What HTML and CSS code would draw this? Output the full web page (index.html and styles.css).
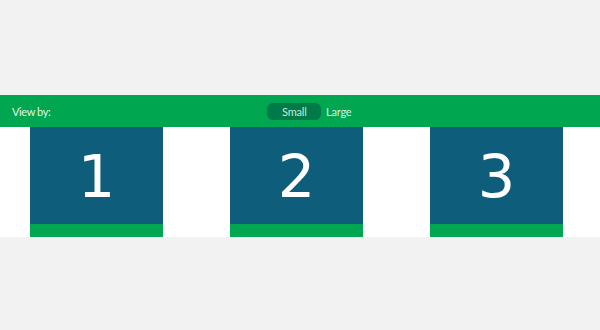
FILE: index.html
```html
<!DOCTYPE html>
<html>
<head>
<meta charset="utf-8">
<link rel="stylesheet" href="styles.css">
</head>
<body>
<div class="page">
  <div class="toolbar">
    <span class="label">View by:</span>
    <div class="toggle">
      <span class="opt active">Small</span>
      <span class="opt">Large</span>
    </div>
  </div>
  <div class="tiles">
    <div class="cell"><div class="tile"><div class="face">1</div><div class="foot"></div></div></div>
    <div class="cell"><div class="tile"><div class="face">2</div><div class="foot"></div></div></div>
    <div class="cell"><div class="tile"><div class="face">3</div><div class="foot"></div></div></div>
  </div>
</div>
</body>
</html>
```
FILE: styles.css
```css
html, body { margin: 0; padding: 0; }
body { background: #f2f2f2; font-family: "Lato", "Open Sans", sans-serif; }
.page { padding-top: 95px; }
.toolbar {
  height: 32px;
  background: #00a650;
  display: flex;
  align-items: center;
  padding: 0 12px;
}
.label { color: #e3f5ea; font-size: 11px; letter-spacing: -0.4px; width: 255px; }
.toggle { display: flex; align-items: center; gap: 5px; }
.opt { color: #d6f0e0; font-size: 11px; height: 17px; line-height: 17px; letter-spacing: -0.2px; }
.opt.active { background: #007a48; color: #cfe6d8; padding: 0 15px; border-radius: 6px; width: 24px; text-align: center; }
.tiles {
  background: #fff;
  display: grid;
  grid-template-columns: repeat(3, 200px);
  height: 110px;
}
.cell { padding-left: 30px; }
.tile { width: 133px; height: 110px; display: flex; flex-direction: column; }
.face {
  flex: 1;
  background: #0e5e7b;
  color: #fff;
  font-family: "DejaVu Sans", sans-serif;
  font-size: 59px;
  display: flex;
  align-items: center;
  justify-content: center;
  padding-top: 2px;
}
.foot { height: 13px; background: #00a650; }
```
